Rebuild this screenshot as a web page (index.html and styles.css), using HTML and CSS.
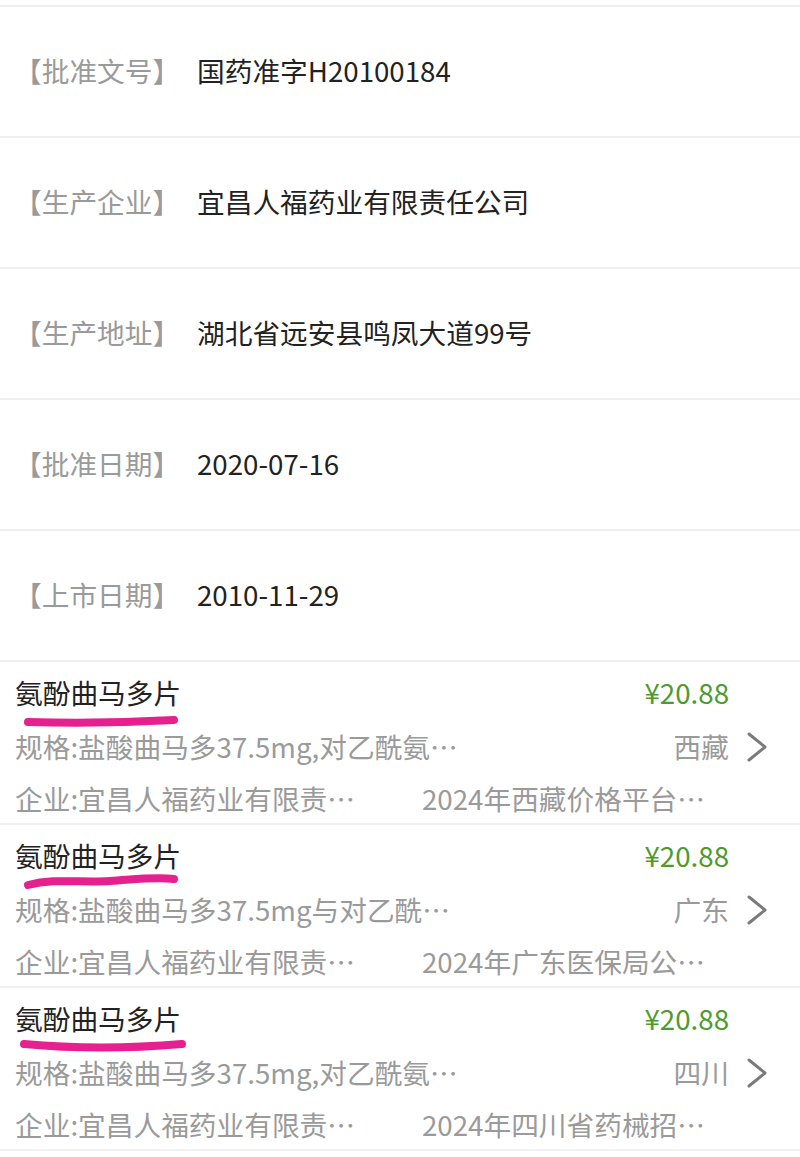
FILE: index.html
```html
<!DOCTYPE html>
<html lang="zh-CN">
<head>
<meta charset="utf-8">
<title>药品信息</title>
<link rel="stylesheet" href="styles.css">
</head>
<body>
<div class="page">
  <section class="info">
    <div class="info-row"><span class="info-label">【批准文号】</span><span class="info-value">国药准字H20100184</span></div>
    <div class="info-row"><span class="info-label">【生产企业】</span><span class="info-value">宜昌人福药业有限责任公司</span></div>
    <div class="info-row"><span class="info-label">【生产地址】</span><span class="info-value">湖北省远安县鸣凤大道99号</span></div>
    <div class="info-row"><span class="info-label">【批准日期】</span><span class="info-value">2020-07-16</span></div>
    <div class="info-row"><span class="info-label">【上市日期】</span><span class="info-value">2010-11-29</span></div>
  </section>

  <section class="list">
    <div class="item">
      <div class="item-main">
        <div class="line line-title"><span class="title">氨酚曲马多片</span><span class="price">¥20.88</span></div>
        <div class="line line-spec"><span class="spec">规格:盐酸曲马多37.5mg,对乙酰氨…</span><span class="region">西藏</span></div>
        <div class="line line-ent"><span class="ent">企业:宜昌人福药业有限责…</span><span class="source">2024年西藏价格平台…</span></div>
      </div>
      <div class="item-arrow"><svg class="chev" viewBox="0 0 22 32" width="22" height="32"><path d="M3 3 L19 16 L3 29" fill="none" stroke="#7a7a7a" stroke-width="3" stroke-linecap="round" stroke-linejoin="round"/></svg></div>
      <svg class="mark" viewBox="0 0 200 80" width="200" height="80"><path d="M28 60 Q100 62 174 58" fill="none" stroke="#e6208f" stroke-width="8" stroke-linecap="round"/></svg>
    </div>
    <div class="item">
      <div class="item-main">
        <div class="line line-title"><span class="title">氨酚曲马多片</span><span class="price">¥20.88</span></div>
        <div class="line line-spec"><span class="spec">规格:盐酸曲马多37.5mg与对乙酰…</span><span class="region">广东</span></div>
        <div class="line line-ent"><span class="ent">企业:宜昌人福药业有限责…</span><span class="source">2024年广东医保局公…</span></div>
      </div>
      <div class="item-arrow"><svg class="chev" viewBox="0 0 22 32" width="22" height="32"><path d="M3 3 L19 16 L3 29" fill="none" stroke="#7a7a7a" stroke-width="3" stroke-linecap="round" stroke-linejoin="round"/></svg></div>
      <svg class="mark" viewBox="0 0 200 80" width="200" height="80"><path d="M28 60 C55 53 80 58 110 56 S155 52 174 54" fill="none" stroke="#e6208f" stroke-width="8" stroke-linecap="round"/></svg>
    </div>
    <div class="item">
      <div class="item-main">
        <div class="line line-title"><span class="title">氨酚曲马多片</span><span class="price">¥20.88</span></div>
        <div class="line line-spec"><span class="spec">规格:盐酸曲马多37.5mg,对乙酰氨…</span><span class="region">四川</span></div>
        <div class="line line-ent"><span class="ent">企业:宜昌人福药业有限责…</span><span class="source">2024年四川省药械招…</span></div>
      </div>
      <div class="item-arrow"><svg class="chev" viewBox="0 0 22 32" width="22" height="32"><path d="M3 3 L19 16 L3 29" fill="none" stroke="#7a7a7a" stroke-width="3" stroke-linecap="round" stroke-linejoin="round"/></svg></div>
      <svg class="mark" viewBox="0 0 200 80" width="200" height="80"><path d="M24 56 Q100 63 182 56" fill="none" stroke="#e6208f" stroke-width="8" stroke-linecap="round"/></svg>
    </div>
  </section>
</div>
</body>
</html>
```

FILE: styles.css
```css
* { box-sizing: border-box; }

html, body {
  margin: 0;
  padding: 0;
  background: #ffffff;
}

body {
  font-family: "Noto Sans CJK SC", "Noto Sans", sans-serif;
  font-size: 27.7px;
  color: #222222;
}

.page {
  width: 800px;
  padding-top: 5px;
}

.info-row {
  display: flex;
  align-items: center;
  height: 131px;
  border-top: 2px solid #efefef;
  padding-left: 14px;
  padding-bottom: 4px;
}

.info-label {
  color: #9a9a9a;
  width: 166px;
  flex: none;
}

.info-value {
  margin-left: 17px;
  color: #222222;
}

.list {
  border-top: 2px solid #efefef;
}

.item {
  position: relative;
  display: flex;
  border-bottom: 2px solid #f0f0f0;
  padding: 3px 0 0 15px;
}

.item-main {
  width: 714px;
  flex: none;
}

.line {
  display: flex;
  align-items: center;
  justify-content: space-between;
  white-space: nowrap;
}

.line-title { height: 54px; }
.line-spec { height: 54px; }
.line-ent { height: 50px; justify-content: flex-start; }

.title { color: #222222; }

.price { color: #4f9a2c; }

.spec, .region, .ent, .source { color: #9a9a9a; }

.ent {
  width: 407px;
  flex: none;
}

.item-arrow {
  flex: 1;
  display: flex;
  align-items: center;
  padding-left: 17px;
  padding-top: 6px;
}

.chev { display: block; }

.mark {
  position: absolute;
  left: 0;
  top: 0;
  pointer-events: none;
}
```
